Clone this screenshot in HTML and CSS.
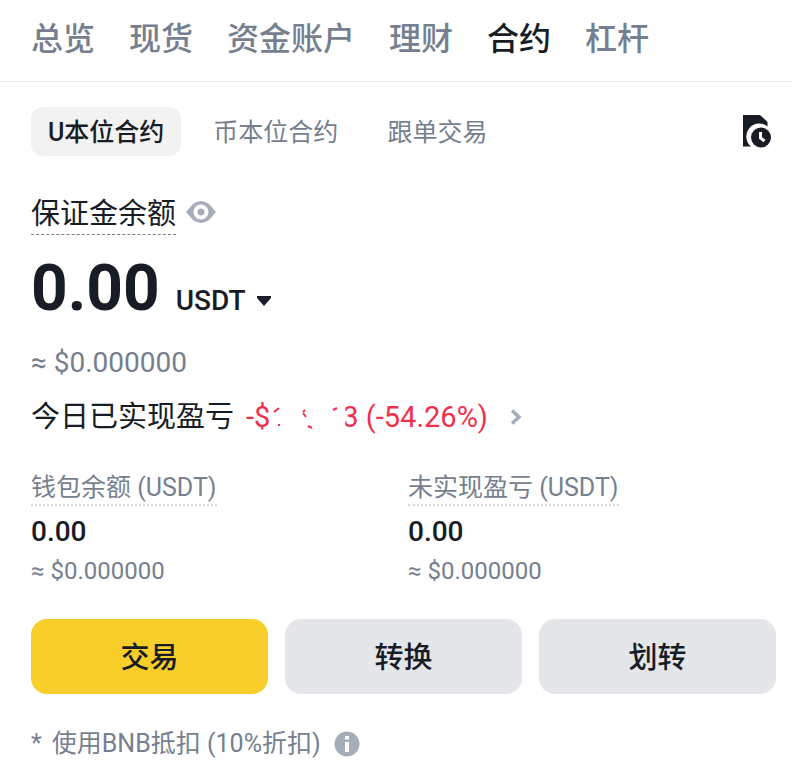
FILE: index.html
```html
<!DOCTYPE html>
<html lang="zh-CN">
<head>
<meta charset="utf-8">
<meta name="viewport" content="width=device-width, initial-scale=1">
<title>合约</title>
<link rel="stylesheet" href="styles.css">
</head>
<body>
<nav class="tabs">
  <a href="#">总览</a>
  <a href="#">现货</a>
  <a href="#">资金账户</a>
  <a href="#">理财</a>
  <a href="#" class="active">合约</a>
  <a href="#">杠杆</a>
</nav>
<main class="content">
  <div class="chips">
    <button class="chip selected">U本位合约</button>
    <button class="chip">币本位合约</button>
    <button class="chip">跟单交易</button>
    <button class="icon-button history" aria-label="历史记录">
      <svg width="30" height="33" viewBox="0 0 30 33">
        <path d="M1 0H18L25.500 7V11.500A12 12 0 0 0 9 31.500H1Z" fill="#181d25"/>
        <circle cx="19" cy="22.500" r="10" fill="#181d25"/>
        <path d="M18.500 17V23L22.500 26" fill="none" stroke="#fff" stroke-width="3"/>
      </svg>
    </button>
  </div>

  <section class="balance">
    <div class="balance-title">
      <h1>保证金余额</h1>
      <button class="icon-button" aria-label="隐藏余额">
        <svg width="30" height="24" viewBox="0 0 30 24">
          <path d="M0 12L7 4Q15-2 23 4L30 12L23 20Q15 26 7 20Z" fill="#a5adb9"/>
          <circle cx="15" cy="12" r="5.500" fill="none" stroke="#fff" stroke-width="4"/>
        </svg>
      </button>
    </div>
    <div class="amount">
      <span class="amount-value">0.00</span>
      <button class="currency">USDT
        <svg width="14" height="10" viewBox="0 0 14 10"><path d="M0 0H14V2L7 10L0 2Z" fill="#181d25"/></svg>
      </button>
    </div>
    <p class="amount-fiat">≈ $0.000000</p>
    <a href="#" class="pnl">
      <span>今日已实现盈亏</span>
      <span class="loss">-$<svg class="fragments" width="72" height="24" viewBox="0 0 72 24" fill="none" stroke="#f0304e" stroke-width="2"><path d="M4 7L9 3M9 19V21M35 5L33 7M33 8L36 12M38 21L42 23M63 5L67 3"/></svg><span class="clipped">3</span> (-54.26%)</span>
      <svg width="12" height="16" viewBox="0 0 12 16"><path d="M2 1.500L9 8L2 14.500" fill="none" stroke="#a5adb9" stroke-width="3.500"/></svg>
    </a>
  </section>

  <dl class="stats">
    <div>
      <dt>钱包余额 (USDT)</dt>
      <dd class="stat-value">0.00</dd>
      <dd class="stat-fiat">≈ $0.000000</dd>
    </div>
    <div>
      <dt>未实现盈亏 (USDT)</dt>
      <dd class="stat-value">0.00</dd>
      <dd class="stat-fiat">≈ $0.000000</dd>
    </div>
  </dl>

  <div class="actions">
    <button class="primary">交易</button>
    <button>转换</button>
    <button>划转</button>
  </div>

  <p class="note">
    <span>*</span>
    <span>使用BNB抵扣 (10%折扣)</span>
    <svg class="info" width="26" height="26" viewBox="0 0 26 26"><circle cx="13" cy="13" r="12.500" fill="#a5adb9"/><path d="M11 5H15V8.500H11ZM11 11H15V21H11Z" fill="#fff"/></svg>
  </p>
</main>
</body>
</html>
```
FILE: styles.css
```css
* { box-sizing: border-box; }
body {
  margin: 0;
  background: #fff;
  color: #181d25;
  font-family: Roboto, "Noto Sans CJK SC", sans-serif;
}
h1, p, dl, dd { margin: 0; }
a { color: inherit; text-decoration: none; }
button {
  margin: 0;
  padding: 0;
  border: 0;
  background: none;
  color: inherit;
  font: inherit;
  cursor: pointer;
}
svg { display: block; flex: none; }
.tabs {
  display: flex;
  gap: 34px;
  padding: 15px 31px 18px;
  border-bottom: 1px solid #eaecef;
  color: #757f8f;
  font-size: 32px;
  font-weight: 500;
  line-height: 48px;
  white-space: nowrap;
}
.tabs .active { color: #181d25; }
.content { padding: 25px 16px 16px 31px; }
.chips { display: flex; align-items: center; gap: 15px; }
.chip {
  padding: 3px 17px 0;
  border-radius: 12px;
  color: #757f8f;
  font-size: 25px;
  line-height: 46px;
}
.chip.selected {
  background: #f2f2f3;
  color: #181d25;
  font-weight: 500;
}
.history { margin: 0 4px 0 auto; }
.balance-title { display: flex; align-items: center; gap: 10px; margin-top: 33px; }
h1 {
  padding-top: 5px;
  border-bottom: 1px dashed #757f8f;
  font-size: 29px;
  font-weight: 400;
  line-height: 40px;
}
.amount { display: flex; align-items: baseline; gap: 16px; margin-top: 16px; }
.amount-value { font-size: 64px; font-weight: 700; line-height: 76px; }
.currency {
  display: flex;
  align-items: center;
  gap: 11px;
  font-size: 28px;
  font-weight: 500;
}
.amount-fiat { margin-top: 18px; color: #757f8f; font-size: 28px; line-height: 36px; }
.pnl {
  display: flex;
  align-items: center;
  gap: 12px;
  margin-top: 14px;
  font-size: 29px;
  line-height: 44px;
}
.loss { display: flex; align-items: center; margin-right: 10px; color: #f0304e; white-space: pre; }
.clipped { clip-path: inset(0 0 0 3px); }
.stats {
  display: grid;
  grid-template-columns: 1fr 1fr;
  gap: 9px;
  margin-top: 32px;
}
.stats dt {
  width: fit-content;
  border-bottom: 2px dotted #d5d8dd;
  color: #757f8f;
  font-size: 25px;
  line-height: 33px;
}
.stat-value { margin-top: 7px; font-size: 28px; font-weight: 500; line-height: 38px; }
.stat-fiat { margin-top: 4px; color: #757f8f; font-size: 24px; line-height: 32px; }
.actions {
  display: grid;
  grid-template-columns: repeat(3, 1fr);
  gap: 17px;
  margin-top: 32px;
}
.actions button {
  padding-top: 3px;
  border-radius: 16px;
  background: #e5e6ea;
  font-size: 29px;
  font-weight: 500;
  line-height: 72px;
}
.actions .primary { background: #f8ce2a; }
.note {
  display: flex;
  align-items: center;
  gap: 10px;
  margin-top: 32px;
  color: #757f8f;
  font-size: 25px;
  line-height: 36px;
}
.info { margin-left: 3px; }
```
